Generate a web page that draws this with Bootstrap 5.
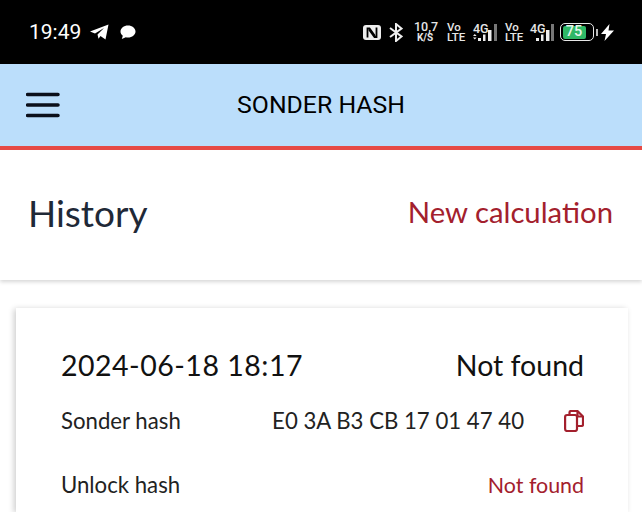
<!DOCTYPE html>
<html lang="en">
<head>
<meta charset="utf-8">
<link href="https://cdn.jsdelivr.net/npm/bootstrap@5.3.0/dist/css/bootstrap.min.css" rel="stylesheet">
<style>
html,body{height:512px;overflow:hidden;background:#fff}
body{font-family:"Lato","Noto Sans",sans-serif;color:#000}
.sb{height:64px;background:#000;color:#fff;padding:0 28px 0 29px}
.sb-time{font-family:"Roboto",sans-serif;font-size:21px;line-height:1;margin-right:9px}
.sb-mini{font-family:"Roboto",sans-serif;font-weight:500;line-height:1;color:#e6e6e6}
.sp-a{font-size:12.5px;line-height:12px;width:22px;text-align:center}
.sp-b{font-size:10px;line-height:10px;font-weight:700;text-align:center}
.sb-vo{width:18px;font-size:11.5px;line-height:10px}
.sb-stack{display:grid;height:18px}
.sb-stack>*{grid-area:1/1}
.sb-4g{font-size:12.5px;line-height:11px}
.bat{width:34px;height:18px;border:1.5px solid #e8e8e8;border-radius:5px;padding:1.5px}
.bat-fill{background:#2fb866;height:100%;width:80%;border-radius:2px;font:500 14.5px/12px "Roboto",sans-serif;color:#e6f5ec;text-align:center}
.bat-cap{width:2px;height:7px;background:#bbb;margin:0 3px 0 2px}
.hdr{height:86px;background:#bbdefb;border-bottom:4px solid #e64a45;padding:0 0 0 26px;position:relative}
.hdr-t{font-family:"Roboto",sans-serif;font-size:24.8px;position:absolute;left:0;right:0;top:0;height:82px;line-height:82px;text-align:center;color:#000}
.sub{height:130px;padding:0 29px 3px 28px;box-shadow:0 2px 4px rgba(0,0,0,.16)}
.sub-t{font-size:37px;color:#1f2937;line-height:1;padding-bottom:3px}
.sub-l{font-size:29.3px;color:#a3202d;line-height:1;padding-bottom:3px}
.rec{margin:28px 14px 0 16px;background:#fff;padding:38px 44px 0 45px;box-shadow:-2px 1px 6px rgba(0,0,0,.2);height:204px;border:0;border-radius:0}
.rec-top{font-size:28.5px;line-height:38px;color:#111}
.rec-date{letter-spacing:.5px}
.rec-row{font-size:22.2px;color:#222;line-height:28px}
.rec-nf{font-size:21.4px}
.red-t{color:#a3202d}
.r1{margin-top:23px}.r2{margin-top:36px}
</style>
</head>
<body>
<div class="sb d-flex align-items-center justify-content-between">
  <div class="d-flex align-items-center">
    <span class="sb-time">19:49</span>
    <svg width="19" height="16" viewBox="0 0 19 16"><path fill="#fff" d="M0 7.500 18.500.5 15.500 15.500 10.500 12 8.500 14.800 7.500 10.500 14 4 5 9.500Z"/></svg>
    <svg width="16" height="15" viewBox="0 0 16 15" style="margin-left:11px"><path fill="#fff" d="M8 .5c4.200 0 7.500 2.700 7.500 6S12.200 12.500 8 12.500c-.8 0-1.500-.1-2.200-.3L1.800 14l1-3.300C1.200 9.600.5 8.100.5 6.500.5 3.200 3.800.5 8 .5Z"/></svg>
  </div>
  <div class="d-flex align-items-center">
    <svg width="18" height="15" viewBox="0 0 18 15"><rect width="18" height="15" rx="3" fill="#eee"/><path d="M4.500 12.500V3.500h2L12 11" fill="none" stroke="#000" stroke-width="1.800"/><path d="M13.500 2.500v9.500h-2L6 4.500" fill="none" stroke="#000" stroke-width="1.800"/></svg>
    <svg width="14" height="19" viewBox="0 0 14 19" style="margin-left:8px"><path d="M1 5 12.500 13.500 7 18V1L12.500 5.500 1 14" fill="none" stroke="#eee" stroke-width="2"/></svg>
    <div class="sb-mini" style="margin-left:11px"><div class="sp-a">10,7</div><div class="sp-b">K/S</div></div>
    <div class="sb-mini sb-vo" style="margin-left:11px"><div>Vo</div><div>LTE</div></div>
    <div class="sb-stack" style="width:25px;margin-left:8px">
      <span class="sb-mini sb-4g">4G</span>
      <svg width="25" height="18" viewBox="0 0 25 18"><path fill="#eee" d="M0 13h3.600L1.800 11ZM0 14.500h3.600L1.800 16.500Z"/><rect x="5" y="15" width="3" height="3" fill="#eee"/><rect x="10" y="11.500" width="2.500" height="6.500" fill="#eee"/><rect x="15" y="7" width="3.500" height="11" fill="#eee"/><rect x="21" y="1" width="3" height="17" fill="#777"/></svg>
    </div>
    <div class="sb-mini sb-vo" style="margin-left:7px"><div>Vo</div><div>LTE</div></div>
    <div class="sb-stack" style="width:24px;margin-left:7px">
      <span class="sb-mini sb-4g">4G</span>
      <svg width="24" height="18" viewBox="0 0 24 18"><rect x="6" y="15" width="3" height="3" fill="#eee"/><rect x="11" y="11.500" width="2.500" height="6.500" fill="#eee"/><rect x="16" y="7" width="3.500" height="11" fill="#eee"/><rect x="21" y="1" width="3" height="17" fill="#777"/></svg>
    </div>
    <div class="bat" style="margin-left:6px"><div class="bat-fill">75</div></div>
    <div class="bat-cap"></div>
    <svg width="13" height="17" viewBox="0 0 13 17"><path fill="#fff" d="M8.500 0 0 10h5L3.500 17 13 6.500H7.500Z"/></svg>
  </div>
</div>
<header class="hdr d-flex align-items-center">
  <svg width="34" height="26" viewBox="0 0 34 26"><path d="M1.500 2.500h30.500M1.500 13h30.500M1.500 23.500h30.500" stroke="#0b0f1a" stroke-width="3.500" stroke-linecap="round"/></svg>
  <div class="hdr-t">SONDER HASH</div>
</header>
<section class="sub d-flex align-items-center justify-content-between">
  <div class="sub-t">History</div>
  <div class="sub-l">New calculation</div>
</section>
<div class="card rec">
  <div class="rec-top d-flex justify-content-between"><span class="rec-date">2024-06-18 18:17</span><span>Not found</span></div>
  <div class="rec-row r1 d-flex align-items-center">
    <span>Sonder hash</span>
    <span class="ms-auto">E0 3A B3 CB 17 01 47 40</span>
    <svg class="red-t" width="20" height="22" viewBox="0 0 20 22" style="margin-left:40px"><g fill="none" stroke="currentColor" stroke-width="2.200" stroke-linejoin="round"><path d="M5.500 5V2.500A1.500 1.500 0 0 1 7 1h6.500L19 6.500v8a1.500 1.500 0 0 1-1.500 1.500H13"/><rect x="1.100" y="5" width="11.900" height="16" rx="2"/><path d="M13.500 1v5.500H19"/></g></svg>
  </div>
  <div class="rec-row r2 d-flex justify-content-between"><span>Unlock hash</span><span class="red-t rec-nf">Not found</span></div>
</div>
</body>
</html>
